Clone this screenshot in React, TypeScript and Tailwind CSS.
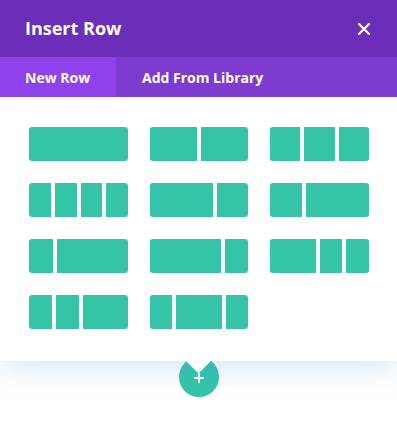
import React from "react";

// each layout: list of column ratios
const layouts: number[][] = [
  [1],
  [1, 1],
  [1, 1, 1],
  [1, 1, 1, 1],
  [2, 1],
  [1, 2],
  [1, 3],
  [3, 1],
  [2, 1, 1],
  [1, 1, 2],
  [1, 2, 1],
];

const grow: Record<number, string> = {
  1: "flex-1",
  2: "flex-2",
  3: "flex-3",
};

const LayoutOption = ({ cols }: { cols: number[] }) => (
  <button className="flex h-[34px] w-full gap-[4px]">
    {cols.map((c, i) => (
      <span
        key={i}
        className={`${grow[c]} h-full bg-[#36c4a9] first:rounded-l-[3px] last:rounded-r-[3px]`}
      />
    ))}
  </button>
);

const App = () => {
  return (
    <div
      className="w-[397px] h-[431px] bg-white overflow-hidden"
      style={{ fontFamily: '"Open Sans", sans-serif' }}
    >
      {/* Modal */}
      <div className="relative z-10 bg-white shadow-[0_5px_30px_rgba(43,135,218,0.22)]">
        {/* Header */}
        <div className="flex h-[57px] items-center justify-between bg-[#6c2eb9] pl-[25px] pr-[27px]">
          <h1 className="text-[18px] font-bold text-white">Insert Row</h1>
          <button aria-label="Close">
            <svg width="12" height="12" viewBox="0 0 12 12">
              <path d="M1 1L11 11M11 1L1 11" stroke="white" strokeWidth="2.2" strokeLinecap="square" />
            </svg>
          </button>
        </div>

        {/* Tabs */}
        <div className="flex h-[40px] bg-[#7e3bd0] text-[14px] font-bold text-white">
          <div className="flex w-[116px] items-center bg-[#8f42ec] pl-[25px]">New Row</div>
          <div className="flex items-center pl-[26px]">Add From Library</div>
        </div>

        {/* Layouts */}
        <div className="grid grid-cols-[repeat(3,98.8px)] gap-x-[21.7px] gap-y-[22px] pl-[29.2px] pt-[30px] pb-[32px]">
          {layouts.map((cols, i) => (
            <LayoutOption key={i} cols={cols} />
          ))}
        </div>

        {/* Arrow */}
        <div className="absolute left-[190px] top-full -mt-[8.5px] h-[17px] w-[17px] rotate-45 bg-white" />
      </div>

      {/* Add button */}
      <div className="relative z-0 -mt-[4px] ml-[179px] flex h-[40px] w-[40px] items-center justify-center rounded-full bg-[#36c4a9]">
        <svg width="10" height="10" viewBox="0 0 10 10" className="mt-[2px]">
          <path d="M5 0V10M0 5H10" stroke="white" strokeWidth="2" />
        </svg>
      </div>
    </div>
  );
};

export default App;
